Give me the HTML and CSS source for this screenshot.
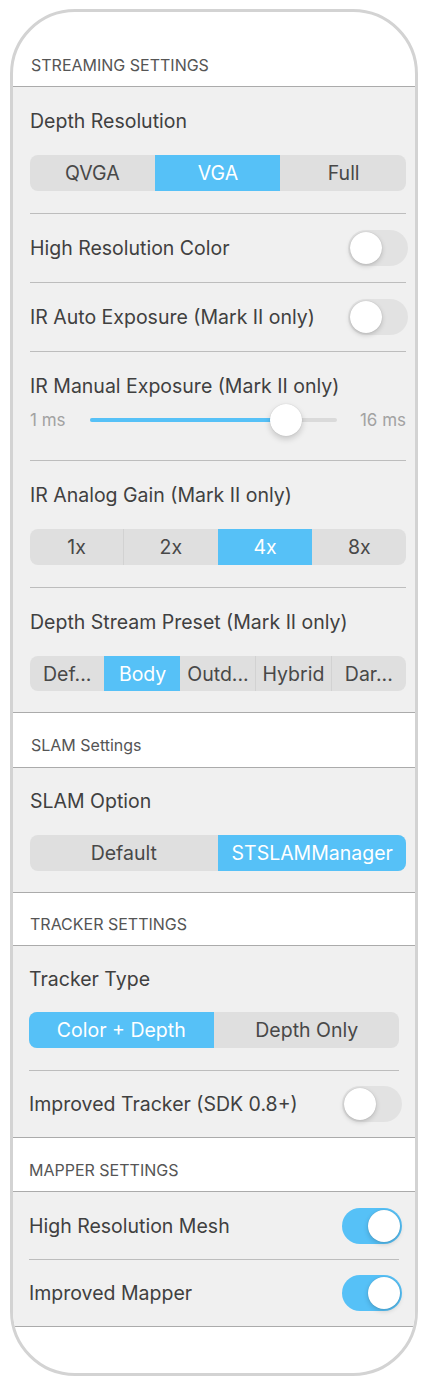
FILE: index.html
```html
<!DOCTYPE html>
<html>
<head>
<meta charset="utf-8">
<link rel="stylesheet" href="styles.css">
</head>
<body>
<div class="frame">
  <div class="sec-head sec-head--first">STREAMING SETTINGS</div>
  <div class="group group--wide">
    <div class="row row-stack">
      <div class="label">Depth Resolution</div>
      <div class="seg">
        <div class="seg-item">QVGA</div>
        <div class="seg-item is-on">VGA</div>
        <div class="seg-item">Full</div>
      </div>
    </div>
    <div class="row row-toggle">
      <div class="label">High Resolution Color</div>
      <div class="switch switch--wide"><span class="knob"></span></div>
    </div>
    <div class="row row-toggle">
      <div class="label">IR Auto Exposure (Mark II only)</div>
      <div class="switch switch--wide"><span class="knob"></span></div>
    </div>
    <div class="row row-slider">
      <div class="label">IR Manual Exposure (Mark II only)</div>
      <div class="slider">
        <span class="slider-end">1 ms</span>
        <div class="track">
          <div class="track-fill" style="width: 79.4%"></div>
          <span class="thumb" style="left: 79.4%"></span>
        </div>
        <span class="slider-end">16 ms</span>
      </div>
    </div>
    <div class="row row-stack">
      <div class="label">IR Analog Gain (Mark II only)</div>
      <div class="seg">
        <div class="seg-item">1x</div>
        <div class="seg-item">2x</div>
        <div class="seg-item is-on">4x</div>
        <div class="seg-item">8x</div>
      </div>
    </div>
    <div class="row row-stack row-stack--last">
      <div class="label">Depth Stream Preset (Mark II only)</div>
      <div class="seg seg--small">
        <div class="seg-item">Def...</div>
        <div class="seg-item is-on">Body</div>
        <div class="seg-item">Outd...</div>
        <div class="seg-item">Hybrid</div>
        <div class="seg-item">Dar...</div>
      </div>
    </div>
  </div>

  <div class="sec-head sec-head--slam">SLAM Settings</div>
  <div class="group group--wide">
    <div class="row row-stack row-stack--slam">
      <div class="label">SLAM Option</div>
      <div class="seg">
        <div class="seg-item">Default</div>
        <div class="seg-item is-on">STSLAMManager</div>
      </div>
    </div>
  </div>

  <div class="sec-head sec-head--tracker">TRACKER SETTINGS</div>
  <div class="group group--narrow">
    <div class="row row-stack row-stack--tracker">
      <div class="label">Tracker Type</div>
      <div class="seg">
        <div class="seg-item is-on">Color + Depth</div>
        <div class="seg-item">Depth Only</div>
      </div>
    </div>
    <div class="row row-toggle row-toggle--short">
      <div class="label">Improved Tracker (SDK 0.8+)</div>
      <div class="switch switch--narrow"><span class="knob"></span></div>
    </div>
  </div>

  <div class="sec-head sec-head--mapper">MAPPER SETTINGS</div>
  <div class="group group--narrow">
    <div class="row row-toggle row-toggle--mid">
      <div class="label">High Resolution Mesh</div>
      <div class="switch switch--narrow is-on"><span class="knob"></span></div>
    </div>
    <div class="row row-toggle row-toggle--short">
      <div class="label">Improved Mapper</div>
      <div class="switch switch--narrow is-on"><span class="knob"></span></div>
    </div>
  </div>
</div>
</body>
</html>
```

FILE: styles.css
```css
html, body {
  margin: 0;
  padding: 0;
  background: #ffffff;
}

body {
  font-family: "Inter", "Noto Sans", "Liberation Sans", sans-serif;
  color: #444444;
}

.frame {
  box-sizing: border-box;
  width: 408px;
  height: 1367px;
  margin: 9px 0 0 10px;
  border: 3px solid #d3d3d3;
  border-radius: 65px;
  overflow: hidden;
  background: #ffffff;
}

.sec-head {
  font-size: 16px;
  line-height: 20px;
  color: #555555;
  padding-left: 18px;
}

.sec-head--first { padding-top: 43px; padding-bottom: 11px; }
.sec-head--slam { padding-top: 22px; padding-bottom: 12px; }
.sec-head--tracker { padding-top: 21px; padding-bottom: 11px; padding-left: 17px; }
.sec-head--mapper { padding-top: 22px; padding-bottom: 11px; padding-left: 16px; }

.group {
  background: #f0f0f0;
  border-top: 1px solid #ababab;
  border-bottom: 1px solid #ababab;
}

.group--wide { padding: 0 9px 0 17px; }
.group--narrow { padding: 0 16px 0 16px; }

.row + .row {
  border-top: 1px solid #bdbdbd;
}

.label {
  font-size: 19.5px;
  line-height: 24px;
  color: #404040;
  white-space: nowrap;
}

.row-stack {
  display: flex;
  flex-direction: column;
  gap: 22px;
  padding: 22px 0;
}

.row-stack--last { padding-bottom: 21px; }
.row-stack--slam { padding: 21px 0; }
.row-stack--tracker { padding: 21px 0 22px; gap: 21px; }

.row-toggle {
  height: 68px;
  display: flex;
  align-items: center;
  justify-content: space-between;
}

.row-toggle--short { height: 66px; }
.row-toggle--mid { height: 67px; }

.seg {
  display: flex;
  height: 36px;
  border-radius: 8px;
  overflow: hidden;
  background: #dfdfdf;
}

.seg-item {
  flex: 1 1 0;
  display: flex;
  align-items: center;
  justify-content: center;
  font-size: 19.5px;
  color: #484848;
  white-space: nowrap;
}

.seg-item + .seg-item {
  border-left: 1px solid #d2d2d2;
}

.seg-item.is-on,
.seg-item.is-on + .seg-item {
  border-left-color: transparent;
}

.seg-item.is-on {
  background: #56c1f7;
  color: #ffffff;
}

.seg--small {
  height: 35px;
}

.switch {
  position: relative;
  flex: 0 0 auto;
  width: 60px;
  height: 36px;
  border-radius: 18px;
  background: #e2e2e2;
}

.switch--wide { margin-right: -2px; }
.switch--narrow { margin-right: -3px; }

.switch.is-on {
  background: #56c1f7;
}

.knob {
  position: absolute;
  top: 2px;
  left: 2px;
  width: 32px;
  height: 32px;
  border-radius: 50%;
  background: #ffffff;
  box-shadow: 0 2px 5px rgba(0, 0, 0, 0.18), 0 0 1px rgba(0, 0, 0, 0.2);
}

.switch.is-on .knob {
  left: auto;
  right: 2px;
}

.row-slider {
  padding: 22px 0 24px;
  display: flex;
  flex-direction: column;
  gap: 6px;
}

.slider {
  display: flex;
  align-items: center;
  height: 32px;
}

.slider-end {
  font-size: 17px;
  color: #a2a2a2;
  white-space: nowrap;
}

.track {
  position: relative;
  flex: 1 1 auto;
  height: 4px;
  margin: 0 23px 0 24px;
  border-radius: 2px;
  background: #dadada;
}

.track-fill {
  height: 100%;
  border-radius: 2px;
  background: #56c1f7;
}

.thumb {
  position: absolute;
  top: 50%;
  width: 32px;
  height: 32px;
  margin: -16px 0 0 -16px;
  border-radius: 50%;
  background: #ffffff;
  box-shadow: 0 3px 6px rgba(0, 0, 0, 0.18), 0 0 1px rgba(0, 0, 0, 0.2);
}
```
